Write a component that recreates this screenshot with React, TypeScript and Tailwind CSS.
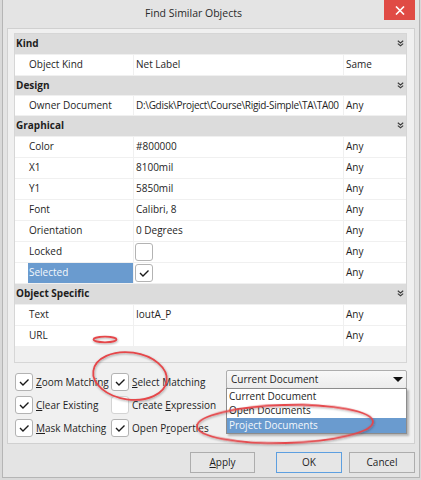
import React from "react";

type RowData = { name: string; value?: string; match: string; check?: boolean; checked?: boolean; selected?: boolean; tight?: boolean };

const sections: { title: string; short?: boolean; rows: RowData[] }[] = [
  { title: "Kind", rows: [{ name: "Object Kind", value: "Net Label", match: "Same" }] },
  { title: "Design", short: true, rows: [{ name: "Owner Document", value: "D:\\Gdisk\\Project\\Course\\Rigid-Simple\\TA\\TA00", match: "Any", tight: true }] },
  {
    title: "Graphical",
    rows: [
      { name: "Color", value: "#800000", match: "Any" },
      { name: "X1", value: "8100mil", match: "Any" },
      { name: "Y1", value: "5850mil", match: "Any" },
      { name: "Font", value: "Calibri, 8", match: "Any" },
      { name: "Orientation", value: "0 Degrees", match: "Any" },
      { name: "Locked", check: true, checked: false, match: "Any" },
      { name: "Selected", check: true, checked: true, selected: true, match: "Any" },
    ],
  },
  {
    title: "Object Specific",
    rows: [
      { name: "Text", value: "IoutA_P", match: "Any" },
      { name: "URL", value: "", match: "Any" },
    ],
  },
];

function Chevrons() {
  return (
    <svg width="7" height="7" viewBox="0 0 7 7" fill="none" stroke="#3a3a3a" strokeWidth="1.1">
      <path d="M0.8 0.8 L3.5 3 L6.2 0.8" />
      <path d="M0.8 3.6 L3.5 5.8 L6.2 3.6" />
    </svg>
  );
}

function Tick() {
  return (
    <svg width="12" height="10" viewBox="0 0 12 10" fill="none" stroke="#1a1a1a" strokeWidth="1.4">
      <path d="M2 5 L5 8 L10.5 2.5" />
    </svg>
  );
}

function Box({ checked, faint }: { checked: boolean; faint?: boolean }) {
  return (
    <div
      className={`w-[18px] h-[18px] shrink-0 rounded-[3px] border bg-white flex items-center justify-center ${
        faint ? "border-[#d4d4d4]" : "border-[#b3b3b3]"
      }`}
    >
      {checked && <Tick />}
    </div>
  );
}

function Option({ checked, label, faint }: { checked: boolean; label: React.ReactNode; faint?: boolean }) {
  return (
    <div className="flex items-center gap-[3px] h-[18px]">
      <Box checked={checked} faint={faint} />
      <span className="whitespace-nowrap">{label}</span>
    </div>
  );
}

function Row({ r, short }: { r: RowData; short?: boolean }) {
  return (
    <div className={`grid grid-cols-[118px_209px_1fr] gap-x-px mb-px ${short ? "h-[19px]" : "h-[20px]"}`}>
      <div className="bg-white flex items-stretch">
        {r.selected ? (
          <span className="ml-[13px] pl-px pb-px flex-1 bg-[#6a9bcf] text-[#f4f8fc] flex items-center">{r.name}</span>
        ) : (
          <span className="pl-[14px] pb-px flex items-center">{r.name}</span>
        )}
      </div>
      <div className={`bg-white flex items-center pl-[2px] pb-px overflow-hidden whitespace-nowrap ${r.tight ? "tracking-[-0.3px]" : ""}`}>
        {r.check ? <div className="-ml-px mt-px"><Box checked={!!r.checked} /></div> : r.value}
      </div>
      <div className="bg-white flex items-center pl-[2px] pb-px">{r.match}</div>
    </div>
  );
}

export default function App() {
  return (
    <div className="relative w-[421px] h-[480px] bg-[#d9d9d9] font-['Open_Sans',sans-serif] text-[10px] text-[#1e1e1e] overflow-hidden">
      <div className="ml-[2px] w-[418px] h-[478px] border-x border-b border-[#b5b5b5] bg-[#e4e4e4] flex flex-col">
        {/* title bar */}
        <div className="h-[28px] flex items-start shrink-0">
          <div className="flex-1 h-full flex items-center justify-center text-[10.5px] text-[#2a2a2a]">Find Similar Objects</div>
          <div className="w-[31px] h-[20px] mr-[4px] bg-[#e04b45] flex items-center justify-center">
            <svg width="10" height="9" viewBox="0 0 10 9" stroke="white" strokeWidth="1.6">
              <path d="M1 0.5 L9 8.5 M9 0.5 L1 8.5" />
            </svg>
          </div>
        </div>

        {/* main panel */}
        <div className="ml-[4px] w-[408px] h-[416px] border border-[#d0d0d0] bg-[#f0f0f0] flex flex-col">
          <div className="ml-[6px] mt-[4px] w-[393px] h-[330px] border border-[#d6d6d6] bg-[#f0f0f0]">
            {sections.map((s) => (
              <div key={s.title}>
                <div
                  className={`mb-px bg-[#dcdcdc] flex items-center justify-between pl-px pr-[2px] pb-px font-bold ${
                    s.short ? "h-[19px]" : "h-[20px]"
                  }`}
                >
                  <span>{s.title}</span>
                  <Chevrons />
                </div>
                {s.rows.map((r) => (
                  <Row key={r.name} r={r} short={s.short} />
                ))}
              </div>
            ))}
          </div>

          {/* options */}
          <div className="flex pl-[7px] pt-[7px]">
            <div className="grid grid-cols-[96px_115px] gap-y-[5px] mt-[3px] content-start">
              <Option checked label={<><u>Z</u>oom Matching</>} />
              <Option checked label={<><u>S</u>elect Matching</>} />
              <Option checked label={<><u>C</u>lear Existing</>} />
              <Option checked={false} faint label={<>Create <u>E</u>xpression</>} />
              <Option checked label={<><u>M</u>ask Matching</>} />
              <Option checked label={<>Open P<u>r</u>operties</>} />
            </div>
            <div className="relative w-[181px]">
              <div className="h-[19px] border border-[#adadad] rounded-[2px] bg-gradient-to-b from-[#f8f8f8] to-[#ececec] flex items-center justify-between pl-[4px] pr-[3px]">
                <span>Current Document</span>
                <svg width="10" height="5" viewBox="0 0 10 5">
                  <path d="M0 0 L10 0 L5 5 Z" fill="#111" />
                </svg>
              </div>
              <div className="absolute top-[18px] left-0 w-[181px] border border-[#8c8c8c] bg-white shadow-[2px_2px_2px_rgba(0,0,0,0.25)]">
                <div className="h-[14px] flex items-center pl-[2px]">Current Document</div>
                <div className="h-[15px] flex items-center pl-[2px]">Open Documents</div>
                <div className="h-[15px] flex items-center pl-[2px] bg-[#6a9bcf] text-[#f4f8fc]">Project Documents</div>
              </div>
            </div>
          </div>
        </div>

        {/* buttons */}
        <div className="flex justify-end pr-[4px] mt-[8px]">
          <button className="w-[65px] h-[21px] border border-[#adadad] bg-[#e6e6e6]">
            <u>A</u>pply
          </button>
          <button className="w-[66px] h-[21px] ml-[21px] border border-[#5d9fe0] bg-[#e6e6e6]">OK</button>
          <button className="w-[66px] h-[21px] ml-[7px] border border-[#adadad] bg-[#e6e6e6]">Cancel</button>
        </div>
      </div>

      {/* red annotation marks */}
      <svg className="absolute inset-0 pointer-events-none" width="421" height="480" viewBox="0 0 421 480" fill="none">
        <defs>
          <filter id="sh" x="-20%" y="-40%" width="140%" height="180%">
            <feDropShadow dx="0.5" dy="1" stdDeviation="0.8" floodColor="#000" floodOpacity="0.35" />
          </filter>
        </defs>
        <g stroke="#e5464a" strokeWidth="1.8" filter="url(#sh)">
          <ellipse cx="105" cy="339.5" rx="11.5" ry="2.8" />
          <ellipse cx="130" cy="376" rx="37" ry="23.5" transform="rotate(8 130 376)" />
          <ellipse cx="285" cy="424" rx="88" ry="19" transform="rotate(-1.5 285 424)" />
        </g>
      </svg>
    </div>
  );
}
